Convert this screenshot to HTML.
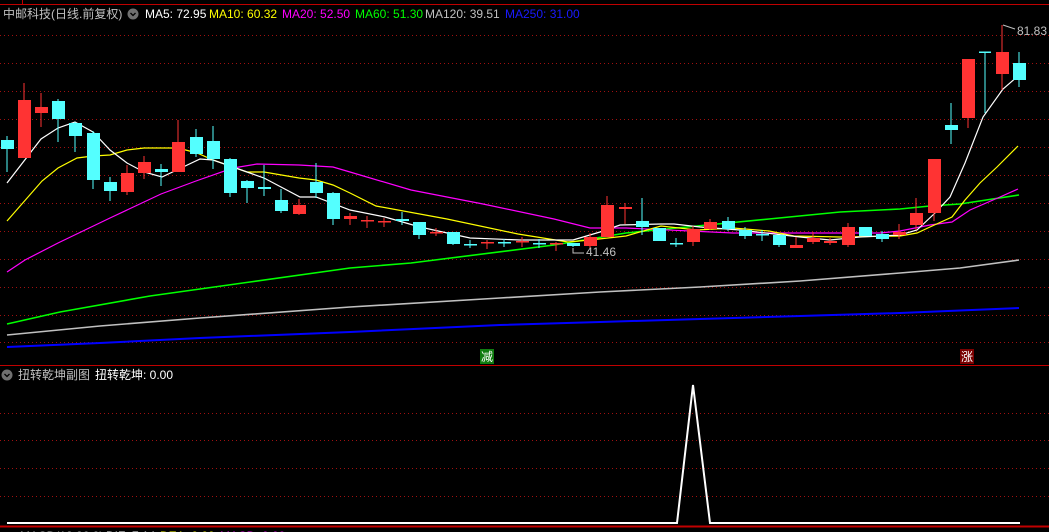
<!DOCTYPE html>
<html><head><meta charset="utf-8"><style>
html,body{margin:0;padding:0;background:#000;width:1049px;height:532px;overflow:hidden}
svg{display:block}
text{font-family:"Liberation Sans","Noto Sans CJK SC",sans-serif;font-size:12px}
</style></head><body>
<svg width="1049" height="532" xmlns="http://www.w3.org/2000/svg">
<rect width="1049" height="532" fill="#000"/>
<line x1="0" y1="4.5" x2="1049" y2="4.5" stroke="#c00000"/>
<line x1="22.5" y1="0" x2="22.5" y2="4" stroke="#c00000"/>
<g stroke="#a01010" stroke-dasharray="1 3">
<line x1="0" y1="35.5" x2="1049" y2="35.5"/><line x1="0" y1="63.5" x2="1049" y2="63.5"/>
<line x1="0" y1="91.5" x2="1049" y2="91.5"/><line x1="0" y1="119.5" x2="1049" y2="119.5"/>
<line x1="0" y1="147.5" x2="1049" y2="147.5"/><line x1="0" y1="175.5" x2="1049" y2="175.5"/>
<line x1="0" y1="203.5" x2="1049" y2="203.5"/><line x1="0" y1="231.5" x2="1049" y2="231.5"/>
<line x1="0" y1="259.5" x2="1049" y2="259.5"/><line x1="0" y1="287.5" x2="1049" y2="287.5"/>
<line x1="0" y1="315.5" x2="1049" y2="315.5"/><line x1="0" y1="342.5" x2="1049" y2="342.5"/>
<line x1="0" y1="413.5" x2="1049" y2="413.5"/><line x1="0" y1="440.5" x2="1049" y2="440.5"/>
<line x1="0" y1="468.5" x2="1049" y2="468.5"/><line x1="0" y1="496.5" x2="1049" y2="496.5"/>
</g>
<line x1="0" y1="365.5" x2="1049" y2="365.5" stroke="#c00000"/>
<line x1="0" y1="526.5" x2="1049" y2="526.5" stroke="#c00000" stroke-width="2"/>

<!-- MA lines -->
<g fill="none" stroke-width="1.2">
<polyline stroke="#0000ff" stroke-width="2" points="7,347 100,343 200,338 350,332 500,325 600,322 700,319 800,316 900,313 1019,308"/>
<polyline stroke="#c0c0c0" stroke-width="1.6" points="7,335 100,326 200,318 350,307 500,298 600,292 700,287 800,281 900,273 960,268 1019,260"/>
<polyline stroke="#00ff00" stroke-width="1.6" points="7,324 60,312 150,296 250,282 350,268 411,263 554,245 626,233 697,226 769,219 840,212 900,209 930,206 960,204 1019,195"/>
<polyline stroke="#ff00ff" points="7,272 25,260 58,243 110,218 161,194 196,181 233,168 257,164 299,165 333,167 350,172 411,190 483,204 554,219 590,228 626,228 733,233 880,233 900,231 930,225 952,222 970,210 1000,197 1018,189"/>
<polyline stroke="#ffff00" points="7,221 42,181 58,168 77,158 93,156 110,155 127,150 144,148 178,148 197,153 213,160 247,172 264,172 299,178 316,180 333,185 350,193 376,206 447,219 518,234 568,242 590,240 626,236 661,226 697,230 733,228 769,231 794,236 840,237 900,236 917,233 930,227 952,217 965,200 980,183 997,167 1018,146"/>
<polyline stroke="#ffffff" points="7,183 41,139 58,128 75,122 93,132 110,150 127,163 144,172 162,177 200,159 213,160 247,172 264,178 300,197 316,197 350,210 385,217 420,227 470,238 520,240 573,240 600,232 620,225 661,224 674,224 700,227 740,230 800,237 830,240 860,237 900,235 917,230 935,213 950,197 965,163 983,117 1003,89 1018,76"/>
</g>

<!-- candles -->
<g id="c">
<g fill="#ff3333">
<rect x="23.5" y="83" width="1" height="75"/><rect x="18" y="100" width="13" height="58"/>
<rect x="40.5" y="93" width="1" height="34"/><rect x="35" y="107" width="13" height="6"/>
<rect x="126.5" y="165" width="1" height="30"/><rect x="121" y="173" width="13" height="19"/>
<rect x="143.5" y="156" width="1" height="23"/><rect x="138" y="162" width="13" height="11"/>
<rect x="177.5" y="120" width="1" height="52"/><rect x="172" y="142" width="13" height="30"/>
<rect x="298.5" y="199" width="1" height="16"/><rect x="293" y="205" width="13" height="9"/>
<rect x="349.5" y="213" width="1" height="12"/><rect x="344" y="216" width="13" height="3"/>
<rect x="366.5" y="216" width="1" height="12"/><rect x="361" y="220" width="13" height="1.5"/>
<rect x="383.5" y="218" width="1" height="9"/><rect x="378" y="221" width="13" height="1.5"/>
<rect x="435.5" y="228" width="1" height="8"/><rect x="430" y="232" width="13" height="1.5"/>
<rect x="486.5" y="240" width="1" height="9"/><rect x="481" y="242" width="13" height="1.5"/>
<rect x="521.5" y="237" width="1" height="10"/><rect x="516" y="241" width="13" height="1.5"/>
<rect x="555.5" y="242" width="1" height="9"/><rect x="550" y="243" width="13" height="1.5"/>
<rect x="589.5" y="233" width="1" height="16"/><rect x="584" y="237" width="13" height="9"/>
<rect x="606.5" y="196" width="1" height="41"/><rect x="601" y="205" width="13" height="32"/>
<rect x="624.5" y="203" width="1" height="21"/><rect x="619" y="207" width="13" height="2"/>
<rect x="692.5" y="226" width="1" height="20"/><rect x="687" y="229" width="13" height="13"/>
<rect x="709.5" y="219" width="1" height="11"/><rect x="704" y="222" width="13" height="7"/>
<rect x="795.5" y="237" width="1" height="11"/><rect x="790" y="245" width="13" height="3"/>
<rect x="812.5" y="232" width="1" height="12"/><rect x="807" y="238" width="13" height="4"/>
<rect x="829.5" y="238" width="1" height="7"/><rect x="824" y="241" width="13" height="2"/>
<rect x="847.5" y="223" width="1" height="24"/><rect x="842" y="227" width="13" height="18"/>
<rect x="898.5" y="224" width="1" height="15"/><rect x="893" y="232" width="13" height="3"/>
<rect x="915.5" y="198" width="1" height="32"/><rect x="910" y="213" width="13" height="12"/>
<rect x="933.5" y="159" width="1" height="62"/><rect x="928" y="159" width="13" height="54"/>
<rect x="967.5" y="59" width="1" height="69"/><rect x="962" y="59" width="13" height="59"/>
<rect x="1001.5" y="25" width="1" height="65"/><rect x="996" y="52" width="13" height="22"/>
</g>
<g fill="#54ffff">
<rect x="6.5" y="136" width="1" height="36"/><rect x="1" y="140" width="13" height="9"/>
<rect x="57.5" y="99" width="1" height="43"/><rect x="52" y="101" width="13" height="18"/>
<rect x="74.5" y="122" width="1" height="30"/><rect x="69" y="123" width="13" height="13"/>
<rect x="92.5" y="131" width="1" height="58"/><rect x="87" y="133" width="13" height="47"/>
<rect x="109.5" y="177" width="1" height="24"/><rect x="104" y="182" width="13" height="9"/>
<rect x="160.5" y="164" width="1" height="22"/><rect x="155" y="169" width="13" height="3"/>
<rect x="195.5" y="129" width="1" height="28"/><rect x="190" y="137" width="13" height="17"/>
<rect x="212.5" y="126" width="1" height="43"/><rect x="207" y="141" width="13" height="18"/>
<rect x="229.5" y="158" width="1" height="39"/><rect x="224" y="159" width="13" height="34"/>
<rect x="246.5" y="180" width="1" height="23"/><rect x="241" y="181" width="13" height="7"/>
<rect x="263.5" y="165" width="1" height="31"/><rect x="258" y="187" width="13" height="2"/>
<rect x="280.5" y="189" width="1" height="24"/><rect x="275" y="200" width="13" height="11"/>
<rect x="315.5" y="163" width="1" height="35"/><rect x="310" y="182" width="13" height="11"/>
<rect x="332.5" y="192" width="1" height="33"/><rect x="327" y="193" width="13" height="26"/>
<rect x="401.5" y="212" width="1" height="13"/><rect x="396" y="219" width="13" height="2"/>
<rect x="418.5" y="222" width="1" height="17"/><rect x="413" y="222" width="13" height="13"/>
<rect x="452.5" y="232" width="1" height="13"/><rect x="447" y="232" width="13" height="12"/>
<rect x="469.5" y="240" width="1" height="8"/><rect x="464" y="244" width="13" height="1.5"/>
<rect x="503.5" y="239" width="1" height="8"/><rect x="498" y="242" width="13" height="1.5"/>
<rect x="538.5" y="239" width="1" height="9"/><rect x="533" y="243" width="13" height="1.5"/>
<rect x="572.5" y="243" width="1" height="4"/><rect x="567" y="243" width="13" height="3"/>
<rect x="641.5" y="198" width="1" height="37"/><rect x="636" y="221" width="13" height="6"/>
<rect x="658.5" y="228" width="1" height="13"/><rect x="653" y="228" width="13" height="13"/>
<rect x="675.5" y="238" width="1" height="9"/><rect x="670" y="243" width="13" height="1.5"/>
<rect x="727.5" y="217" width="1" height="14"/><rect x="722" y="221" width="13" height="8"/>
<rect x="744.5" y="227" width="1" height="12"/><rect x="739" y="230" width="13" height="6"/>
<rect x="761.5" y="230" width="1" height="11"/><rect x="756" y="234" width="13" height="1.5"/>
<rect x="778.5" y="235" width="1" height="12"/><rect x="773" y="235" width="13" height="10"/>
<rect x="864.5" y="227" width="1" height="9"/><rect x="859" y="227" width="13" height="9"/>
<rect x="881.5" y="231" width="1" height="11"/><rect x="876" y="234" width="13" height="5"/>
<rect x="950.5" y="103" width="1" height="41"/><rect x="945" y="125" width="13" height="5"/>
<rect x="984.5" y="52" width="1" height="61"/><rect x="979" y="51.5" width="12" height="1.5"/>
<rect x="1018.5" y="52" width="1" height="35"/><rect x="1013" y="63" width="13" height="17"/>
</g>
</g>

<!-- price labels -->
<polyline points="1003,25 1006,26 1015,29" fill="none" stroke="#c0c0c0"/>
<text x="1017" y="35" fill="#c0c0c0">81.83</text>
<polyline points="573,248 573,253 584,253" fill="none" stroke="#c0c0c0"/>
<text x="586" y="256" fill="#c0c0c0">41.46</text>

<!-- signals -->
<rect x="480" y="349" width="14" height="15" fill="#107c10"/>
<text x="481" y="361" fill="#fff" style="font-size:12px">减</text>
<rect x="960" y="349" width="14" height="15" fill="#7a0000"/>
<text x="961" y="361" fill="#fff" style="font-size:12px">涨</text>

<!-- header -->
<text x="3" y="18" fill="#c0c0c0">中邮科技(日线.前复权)</text>
<circle cx="133" cy="14" r="5.5" fill="#707070"/>
<polyline points="130.5,13 133,15.5 135.5,13" fill="none" stroke="#000" stroke-width="1.3"/>
<text x="145" y="18" fill="#ffffff">MA5: 72.95</text>
<text x="209" y="18" fill="#ffff00">MA10: 60.32</text>
<text x="282" y="18" fill="#ff00ff">MA20: 52.50</text>
<text x="355" y="18" fill="#00ff00">MA60: 51.30</text>
<text x="425" y="18" fill="#c0c0c0">MA120: 39.51</text>
<text x="505" y="18" fill="#1a1aff">MA250: 31.00</text>

<!-- sub chart -->
<circle cx="7" cy="375" r="5.5" fill="#707070"/>
<polyline points="4.5,374 7,376.5 9.5,374" fill="none" stroke="#000" stroke-width="1.3"/>
<text x="18" y="379" fill="#c0c0c0">扭转乾坤副图</text>
<text x="95" y="379" fill="#ffffff">扭转乾坤: 0.00</text>
<polyline points="7,523 677,523 693,385 710,523 1020,523" fill="none" stroke="#fff" stroke-width="2"/>
<text x="20" y="540" fill="#c0c0c0">MACD(12,26,9)</text>
<text x="106" y="540" fill="#fff">DIF: 7.14</text>
<text x="160" y="540" fill="#ffff00">DEA: 0.00</text>
<text x="220" y="540" fill="#ff00ff">MACD: 0.00</text>
</svg>
</body></html>
